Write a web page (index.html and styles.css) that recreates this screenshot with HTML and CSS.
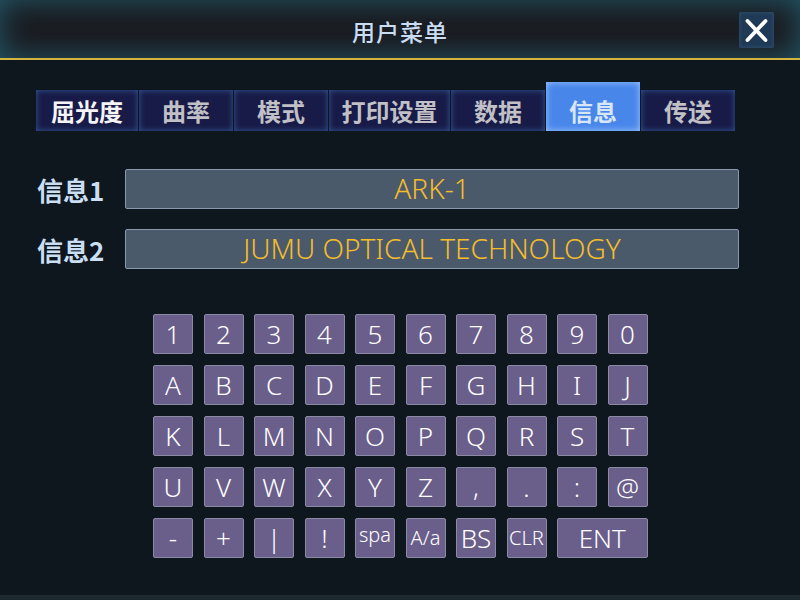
FILE: index.html
```html
<!DOCTYPE html>
<html lang="zh">
<head>
<meta charset="utf-8">
<title>用户菜单</title>
<link rel="stylesheet" href="styles.css">
</head>
<body>
<div class="screen">
  <header class="header">
    <div class="title">用户菜单</div>
    <button class="close" aria-label="关闭">
      <svg width="35" height="36" viewBox="0 0 35 36"><path d="M8.5 9 L26.5 28 M26.5 9 L8.5 28" stroke="#ffffff" stroke-width="3.8" stroke-linecap="round" fill="none"/></svg>
    </button>
  </header>

  <nav class="tabs">
    <div class="tab tab-first">屈光度</div>
    <div class="tab">曲率</div>
    <div class="tab">模式</div>
    <div class="tab tab-wide">打印设置</div>
    <div class="tab">数据</div>
    <div class="tab tab-active">信息</div>
    <div class="tab">传送</div>
  </nav>

  <section class="fields">
    <div class="field-row">
      <div class="label">信息1</div>
      <div class="input">ARK-1</div>
    </div>
    <div class="field-row">
      <div class="label">信息2</div>
      <div class="input">JUMU OPTICAL TECHNOLOGY</div>
    </div>
  </section>

  <section class="keypad">
    <div class="key">1</div><div class="key">2</div><div class="key">3</div><div class="key">4</div><div class="key">5</div>
    <div class="key">6</div><div class="key">7</div><div class="key">8</div><div class="key">9</div><div class="key">0</div>
    <div class="key">A</div><div class="key">B</div><div class="key">C</div><div class="key">D</div><div class="key">E</div>
    <div class="key">F</div><div class="key">G</div><div class="key">H</div><div class="key">I</div><div class="key">J</div>
    <div class="key">K</div><div class="key">L</div><div class="key">M</div><div class="key">N</div><div class="key">O</div>
    <div class="key">P</div><div class="key">Q</div><div class="key">R</div><div class="key">S</div><div class="key">T</div>
    <div class="key">U</div><div class="key">V</div><div class="key">W</div><div class="key">X</div><div class="key">Y</div>
    <div class="key">Z</div><div class="key">,</div><div class="key">.</div><div class="key">:</div><div class="key">@</div>
    <div class="key">-</div><div class="key">+</div><div class="key">|</div><div class="key">!</div><div class="key key-small key-spa">spa</div>
    <div class="key key-small">A/a</div><div class="key">BS</div><div class="key key-small">CLR</div><div class="key key-ent">ENT</div>
  </section>

  <div class="footer"></div>
</div>
</body>
</html>
```

FILE: styles.css
```css
html, body {
  margin: 0;
  padding: 0;
  background: #0e171d;
}

.screen {
  width: 800px;
  height: 600px;
  overflow: hidden;
  display: flex;
  flex-direction: column;
  background: #0e171d;
  font-family: "Noto Sans", "Noto Sans CJK SC", sans-serif;
}

.header {
  height: 58px;
  border-bottom: 2px solid #d6b53e;
  background: #1a1b20;
  box-shadow: inset 0 0 30px rgba(38, 105, 125, 0.8);
  display: grid;
  grid-template-columns: 1fr auto 1fr;
  align-items: center;
}

.title {
  grid-column: 2;
  font-family: "Noto Sans CJK SC", sans-serif;
  font-size: 23px;
  font-weight: 500;
  color: #c9dcf2;
  letter-spacing: 1px;
  padding-top: 3px;
}

.close {
  grid-column: 3;
  justify-self: end;
  margin-right: 26px;
  margin-top: 2px;
  width: 35px;
  height: 36px;
  padding: 0;
  border: none;
  border-radius: 2px;
  background: #1f3a56;
  box-shadow: inset 0 0 4px rgba(120, 160, 200, 0.25);
  display: flex;
}

.tabs {
  display: flex;
  align-items: flex-end;
  padding: 22px 0 0 36px;
  gap: 1px;
}

.tab {
  width: 94px;
  height: 41px;
  box-sizing: border-box;
  display: flex;
  align-items: center;
  justify-content: center;
  background: #181b47;
  box-shadow: inset 0 0 6px rgba(60, 110, 180, 0.75);
  font-family: "Noto Sans CJK SC", sans-serif;
  font-size: 24px;
  font-weight: 700;
  color: #c0c0c6;
}

.tab-first {
  width: 102px;
  color: #f4f4f6;
}

.tab-wide {
  width: 121px;
}

.tab-active {
  height: 49px;
  padding-top: 8px;
  background: #4886ea;
  box-shadow: inset 0 0 7px rgba(170, 210, 255, 0.9);
  color: #d8e6f8;
}

.fields {
  margin-top: 38px;
  display: flex;
  flex-direction: column;
  gap: 20px;
}

.field-row {
  display: flex;
  align-items: center;
  padding-left: 37px;
}

.label {
  width: 88px;
  font-family: "Noto Sans CJK SC", sans-serif;
  font-size: 26px;
  font-weight: 700;
  color: #cadff4;
}

.input {
  width: 614px;
  height: 40px;
  box-sizing: border-box;
  border: 1px solid #8898ae;
  border-radius: 2px;
  background: #4a5a6b;
  color: #f5bc2c;
  font-size: 28px;
  font-weight: 350;
  text-align: center;
  line-height: 37px;
}

.keypad {
  margin-top: 45px;
  margin-left: 153px;
  display: grid;
  grid-template-columns: repeat(10, 40px);
  grid-auto-rows: 40px;
  column-gap: 10.5px;
  row-gap: 11px;
}

.key {
  box-sizing: border-box;
  border: 1px solid #8a8aa4;
  border-radius: 2px;
  background: #6a5e8b;
  color: #ffffff;
  font-size: 26px;
  font-weight: 350;
  display: flex;
  align-items: center;
  justify-content: center;
  line-height: 1;
}

.key-small {
  font-size: 20px;
}

.key-spa {
  padding-bottom: 6px;
}

.key-ent {
  grid-column: span 2;
}

.footer {
  margin-top: auto;
  height: 5px;
  background: #1e292f;
}
```
